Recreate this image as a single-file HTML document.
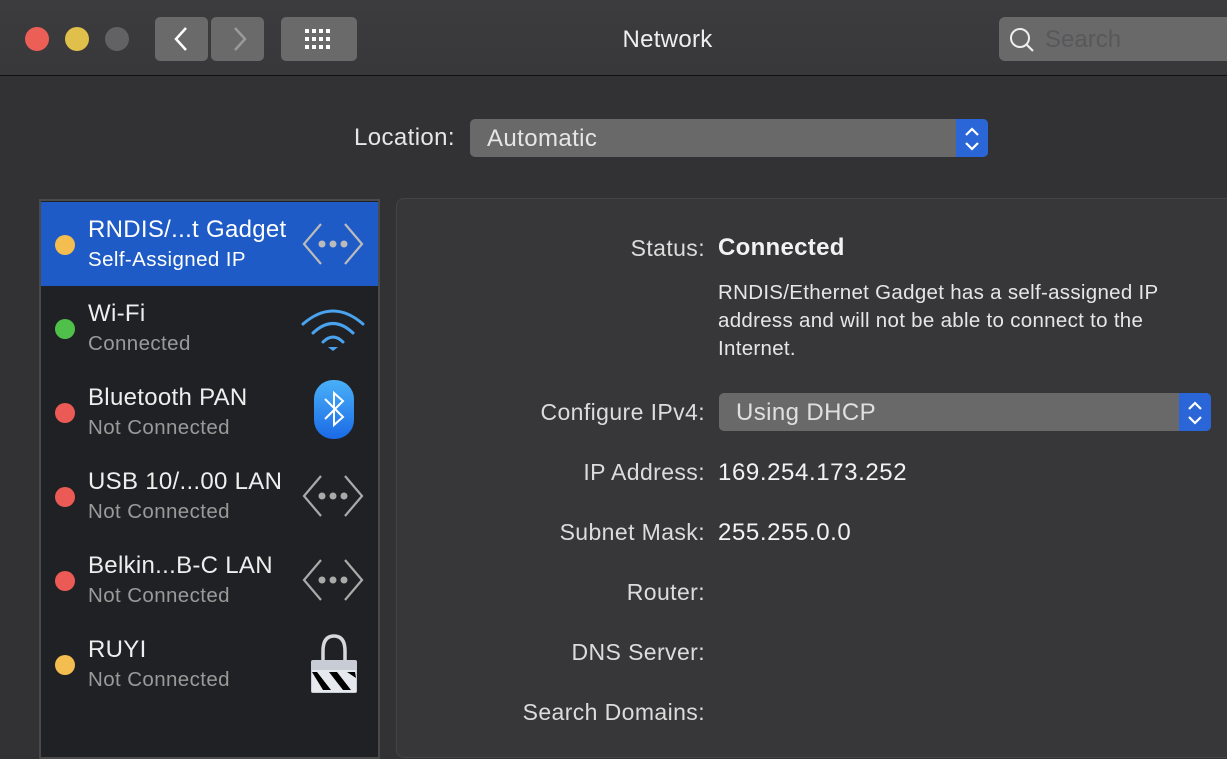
<!DOCTYPE html>
<html><head><style>
*{margin:0;padding:0;box-sizing:border-box}
body{width:1227px;height:747px;overflow:hidden;background:#323234;font-family:"Liberation Sans",sans-serif;color:#e6e6e6;position:relative}
.abs{position:absolute}
.tb{left:0;top:0;width:1227px;height:76px;background:linear-gradient(#3c3c3e,#38383a);border-bottom:1px solid #111}
.dot{width:24px;height:24px;border-radius:50%;top:27px}
.btn{background:#6a6a6b;border-radius:5px;top:17px;height:44px}
.lbl{font-size:23px;letter-spacing:0.4px;color:#dcdcdc;text-align:right;width:300px;left:405px}
.val{font-size:24px;letter-spacing:0.6px;color:#f2f2f2;left:718px}
.row{left:41px;width:337px;height:84px}
.sd{width:20px;height:20px;border-radius:50%;left:14px;top:33px}
.t1{left:47px;top:14px;font-size:24px;letter-spacing:0.3px;color:#eee}
.t2{left:47px;top:46px;font-size:20.5px;letter-spacing:0.4px;color:#9a9a9a}
.ic{left:260px;top:18px}
</style></head><body>
<div class="abs tb"></div>
<div class="abs dot" style="left:25px;background:#ec5f57"></div>
<div class="abs dot" style="left:65px;background:#e0c04a"></div>
<div class="abs dot" style="left:105px;background:#626264"></div>
<div class="abs btn" style="left:155px;width:53px"></div>
<div class="abs btn" style="left:211px;width:53px"></div>
<svg class="abs" style="left:155px;top:17px" width="110" height="44"><path d="M31 11 L21 22 L31 33" stroke="#fff" stroke-width="2.5" fill="none"/><path d="M80 11 L90 22 L80 33" stroke="#9a9a9a" stroke-width="2.5" fill="none"/></svg>
<div class="abs btn" style="left:281px;width:76px"></div>
<svg class="abs" style="left:281px;top:17px" width="76" height="44"><g fill="#fff"><rect x="24" y="12" width="4" height="4"/><rect x="31" y="12" width="4" height="4"/><rect x="38" y="12" width="4" height="4"/><rect x="45" y="12" width="4" height="4"/><rect x="24" y="20" width="4" height="4"/><rect x="31" y="20" width="4" height="4"/><rect x="38" y="20" width="4" height="4"/><rect x="45" y="20" width="4" height="4"/><rect x="24" y="28" width="4" height="4"/><rect x="31" y="28" width="4" height="4"/><rect x="38" y="28" width="4" height="4"/><rect x="45" y="28" width="4" height="4"/></g></svg>
<div class="abs" style="left:560px;top:26px;width:215px;text-align:center;font-size:24px;letter-spacing:0.3px;color:#eee">Network</div>
<div class="abs" style="left:999px;top:17px;width:240px;height:44px;background:#69696a;border-radius:6px"></div>
<svg class="abs" style="left:1008px;top:26px" width="30" height="30"><circle cx="12" cy="12" r="9" stroke="#eee" stroke-width="2" fill="none"/><path d="M18 18 L25 25" stroke="#eee" stroke-width="2.2"/></svg>
<div class="abs" style="left:1045px;top:26px;font-size:24px;color:#58585a">Search</div>

<div class="abs" style="left:320px;top:124px;width:135px;text-align:right;font-size:24px;letter-spacing:0.4px;color:#e6e6e6">Location:</div>
<div class="abs" style="left:470px;top:119px;width:518px;height:38px;background:#69696a;border-radius:5px;overflow:hidden"><div class="abs" style="right:0;top:0;width:32px;height:38px;background:#2a66d8"></div></div>
<svg class="abs" style="left:956px;top:119px" width="32" height="38"><path d="M10 16 L16 10 L22 16 M10 24 L16 30 L22 24" stroke="#fff" stroke-width="2.2" fill="none"/></svg>
<div class="abs" style="left:487px;top:125px;font-size:24px;letter-spacing:0.4px;color:#e6e6e6">Automatic</div>

<div class="abs" style="left:39px;top:199px;width:341px;height:560px;background:#202124;border:2px solid #4a4a4b"></div>
<div class="abs row" style="top:202px;background:#1e5bc6"><div class="abs sd" style="background:#f3bd4f"></div><div class="abs t1" style="color:#fff">RNDIS/...t Gadget</div><div class="abs t2" style="color:#fff">Self-Assigned IP</div>
<svg class="abs ic" width="64" height="48"><path d="M20 4 L3 24 L20 44 M44 4 L61 24 L44 44" stroke="#bbb" stroke-width="2.2" fill="none"/><circle cx="21" cy="24" r="3.5" fill="#bbb"/><circle cx="32" cy="24" r="3.5" fill="#bbb"/><circle cx="43" cy="24" r="3.5" fill="#bbb"/></svg></div>
<div class="abs row" style="top:286px"><div class="abs sd" style="background:#4fc14a"></div><div class="abs t1">Wi-Fi</div><div class="abs t2">Connected</div>
<svg class="abs ic" style="top:14px" width="64" height="52"><g stroke="#4aa3ef" stroke-width="3" fill="none" stroke-linecap="round"><path d="M2 24 Q32 -2 62 24"/><path d="M12 33 Q32 14 52 33"/><path d="M22 42 Q32 32 42 42"/></g><path d="M27 47 L32 51 L37 47 Z" fill="#4aa3ef"/></svg></div>
<div class="abs row" style="top:370px"><div class="abs sd" style="background:#eb5a55"></div><div class="abs t1">Bluetooth PAN</div><div class="abs t2">Not Connected</div>
<svg class="abs" style="left:272px;top:9px" width="42" height="62"><defs><linearGradient id="b" x1="0" y1="0" x2="0" y2="1"><stop offset="0" stop-color="#4ab0f8"/><stop offset="1" stop-color="#1a6ae6"/></linearGradient></defs><rect x="1" y="1" width="40" height="59" rx="19" fill="url(#b)"/><path d="M12 20 L30 38 L21 46 L21 14 L30 22 L12 40" stroke="#fff" stroke-width="2" fill="none"/></svg></div>
<div class="abs row" style="top:454px"><div class="abs sd" style="background:#eb5a55"></div><div class="abs t1">USB 10/...00 LAN</div><div class="abs t2">Not Connected</div>
<svg class="abs ic" width="64" height="48"><path d="M20 4 L3 24 L20 44 M44 4 L61 24 L44 44" stroke="#aaa" stroke-width="2.2" fill="none"/><circle cx="21" cy="24" r="3.5" fill="#aaa"/><circle cx="32" cy="24" r="3.5" fill="#aaa"/><circle cx="43" cy="24" r="3.5" fill="#aaa"/></svg></div>
<div class="abs row" style="top:538px"><div class="abs sd" style="background:#eb5a55"></div><div class="abs t1">Belkin...B-C LAN</div><div class="abs t2">Not Connected</div>
<svg class="abs ic" width="64" height="48"><path d="M20 4 L3 24 L20 44 M44 4 L61 24 L44 44" stroke="#aaa" stroke-width="2.2" fill="none"/><circle cx="21" cy="24" r="3.5" fill="#aaa"/><circle cx="32" cy="24" r="3.5" fill="#aaa"/><circle cx="43" cy="24" r="3.5" fill="#aaa"/></svg></div>
<div class="abs row" style="top:622px"><div class="abs sd" style="background:#f3bd4f"></div><div class="abs t1">RUYI</div><div class="abs t2">Not Connected</div>
<svg class="abs" style="left:268px;top:10px" width="50" height="64"><path d="M14 28 V19 Q14 4 25 4 Q36 4 36 19 V28" stroke="#d8d8dc" stroke-width="3.5" fill="none"/><rect x="2" y="28" width="46" height="33" rx="2" fill="#c8ccd4"/><rect x="3" y="38" width="44" height="22" fill="#e6eaee"/><path d="M3 40 L8 40 L22 58 L14 58 Z M20 40 L28 40 L42 58 L34 58 Z M38 40 L46 40 L47 46 Z" fill="#000"/></svg></div>

<div class="abs" style="left:396px;top:198px;width:850px;height:560px;background:#373739;border:1px solid #444;border-radius:8px"></div>
<div class="abs lbl" style="top:235px">Status:</div>
<div class="abs val" style="top:234px;font-weight:bold;font-size:24px;letter-spacing:0.3px">Connected</div>
<div class="abs" style="left:718px;top:279px;width:500px;font-size:20.5px;letter-spacing:0.3px;line-height:28px;color:#e6e6e6">RNDIS/Ethernet Gadget has a self-assigned IP address and will not be able to connect to the Internet.</div>
<div class="abs lbl" style="top:399px">Configure IPv4:</div>
<div class="abs" style="left:719px;top:393px;width:492px;height:38px;background:#69696a;border-radius:5px;overflow:hidden"><div class="abs" style="right:0;top:0;width:32px;height:38px;background:#2a66d8"></div></div>
<svg class="abs" style="left:1179px;top:393px" width="32" height="38"><path d="M10 16 L16 10 L22 16 M10 24 L16 30 L22 24" stroke="#fff" stroke-width="2.2" fill="none"/></svg>
<div class="abs" style="left:736px;top:399px;font-size:24px;letter-spacing:0.4px;color:#e0e0e0">Using DHCP</div>
<div class="abs lbl" style="top:459px">IP Address:</div>
<div class="abs val" style="top:459px">169.254.173.252</div>
<div class="abs lbl" style="top:519px">Subnet Mask:</div>
<div class="abs val" style="top:519px">255.255.0.0</div>
<div class="abs lbl" style="top:579px">Router:</div>
<div class="abs lbl" style="top:639px">DNS Server:</div>
<div class="abs lbl" style="top:699px">Search Domains:</div>
</body></html>
